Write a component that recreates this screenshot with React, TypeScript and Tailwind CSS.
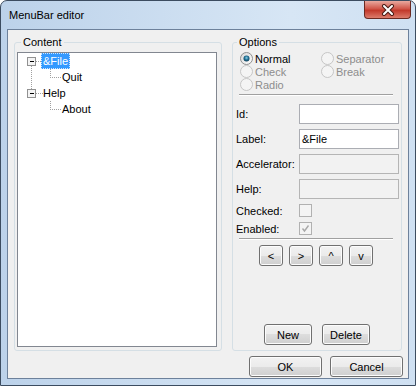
import React from 'react';

const btn =
  'flex items-center justify-center rounded-[3px] border border-[#707070] bg-[linear-gradient(#f2f2f2_0%,#ebebeb_50%,#dddddd_50%,#cfcfcf_100%)] shadow-[inset_0_0_0_1px_#fcfcfc] text-black';

const Radio: React.FC<{ checked?: boolean; disabled?: boolean; label: string }> = ({ checked, disabled, label }) => (
  <div className="flex h-[13px] items-center gap-[2px]">
    <svg width="13" height="13" viewBox="0 0 13 13">
      <defs>
        <radialGradient id="rdot" cx="50%" cy="40%" r="60%">
          <stop offset="0%" stopColor="#8ad0e8" />
          <stop offset="55%" stopColor="#1f6d90" />
          <stop offset="100%" stopColor="#0f3f5a" />
        </radialGradient>
        <linearGradient id="rfill" x1="0" y1="0" x2="1" y2="1">
          <stop offset="0%" stopColor="#d6d6d6" />
          <stop offset="100%" stopColor="#ffffff" />
        </linearGradient>
      </defs>
      <circle cx="6.5" cy="6.5" r="6" fill={disabled ? '#f4f4f4' : 'url(#rfill)'} stroke={disabled ? '#c5c5c5' : '#8e8f8f'} />
      {checked && <circle cx="6.5" cy="6.5" r="3" fill="url(#rdot)" />}
    </svg>
    <span className={disabled ? 'text-[#8d8d8d]' : 'text-black'}>{label}</span>
  </div>
);

const Field: React.FC<{ label: string; value?: string; disabled?: boolean }> = ({ label, value, disabled }) => (
  <div className="flex h-[20px] items-center">
    <span className="w-[63px]">{label}</span>
    <div
      className={`flex h-[20px] w-[100px] items-center border px-[2px] ${
        disabled ? 'border-[#b5b5b5] bg-[#f2f2f2]' : 'border-[#abadb3] bg-white'
      }`}
    >
      {value}
    </div>
  </div>
);

const Check: React.FC<{ label: string; checked?: boolean }> = ({ label, checked }) => (
  <div className="flex h-[13px] items-center">
    <span className="w-[63px]">{label}</span>
    <div className="flex h-[13px] w-[13px] items-center justify-center border border-[#b1b1b1] bg-[#f4f4f4]">
      {checked && (
        <svg width="9" height="9" viewBox="0 0 9 9">
          <path d="M1.5 4.5 L3.5 7 L7.5 1.5" fill="none" stroke="#a8a8a8" strokeWidth="1.4" />
        </svg>
      )}
    </div>
  </div>
);

const Etched: React.FC = () => <div className="ml-[6px] mr-[8px] border-t border-b border-t-[#a0a0a0] border-b-white" />;

const TreeLines: React.FC = () => (
  <svg className="absolute left-0 top-0" width="80" height="70" shapeRendering="crispEdges">
    <g stroke="#a0a0a0" strokeDasharray="1 1" fill="none">
      <path d="M13.5 13 V36" />
      <path d="M18 8.5 H23" />
      <path d="M18 40.5 H25" />
      <path d="M32.5 16 V24" />
      <path d="M32 24.5 H43" />
      <path d="M32.5 48 V56" />
      <path d="M32 56.5 H43" />
    </g>
    {[4, 36].map((y) => (
      <g key={y}>
        <rect x="9.5" y={y + 0.5} width="8" height="8" fill="#f4f4f4" stroke="#919191" />
        <path d={`M11.5 ${y + 4.5} H15.5`} stroke="#000" />
      </g>
    ))}
  </svg>
);

const App: React.FC = () => {
  return (
    <div className="h-[386px] w-[416px] bg-white font-['Liberation_Sans',Arial,sans-serif] text-[11px] leading-[14px] text-black">
      <div className="flex h-full flex-col rounded-t-[7px] border border-[#3c4c60] bg-[linear-gradient(to_right,#bcd2ea,#d7e6f5_70%,#cfe0f2)]">
        {/* Title bar */}
        <div className="flex h-[28px] items-start justify-between">
          <span className="ml-[8px] mt-[7px]">MenuBar editor</span>
          <div className="mr-[4px] flex h-[18px] w-[47px] items-center justify-center rounded-b-[4px] border border-t-0 border-[#6b2a22] bg-[linear-gradient(#e9a99f_0%,#d0574a_45%,#c2392b_55%,#dc7b6b_100%)]">
            <svg width="16" height="12" viewBox="0 0 16 12">
              <path d="M4 2 L12 10 M12 2 L4 10" stroke="#4a1c16" strokeWidth="4" strokeLinecap="round" />
              <path d="M4 2 L12 10 M12 2 L4 10" stroke="#ffffff" strokeWidth="2" strokeLinecap="round" />
            </svg>
          </div>
        </div>

        {/* Client area */}
        <div className="mx-[6px] flex h-[350px] flex-col border border-[#6d819b] bg-[#f0f0f0]">
          <div className="mt-[4px] flex gap-[10px] pl-[6px]">
            {/* Content */}
            <fieldset className="h-[317px] w-[208px] rounded-[3px] border border-[#d5dfe5] pl-[2px] pr-[4px]">
              <legend className="ml-[4px] px-[2px] leading-[16px]">Content</legend>
              <div className="relative mt-[2px] h-[295px] border border-[#828790] bg-white">
                <TreeLines />
                <div className="relative flex flex-col">
                  <div className="flex h-[16px] items-center pl-[23px]">
                    <span className="bg-[#3399ff] px-[2px] leading-[16px] text-white outline-1 outline-dotted outline-[#cfe6ff] -outline-offset-1">&amp;File</span>
                  </div>
                  <div className="flex h-[16px] items-center pl-[44px]">Quit</div>
                  <div className="flex h-[16px] items-center pl-[25px]">Help</div>
                  <div className="flex h-[16px] items-center pl-[44px]">About</div>
                </div>
              </div>
            </fieldset>

            {/* Options */}
            <fieldset className="flex h-[317px] w-[170px] flex-col rounded-[3px] border border-[#d5dfe5]">
              <legend className="ml-[4px] px-[2px] leading-[16px]">Options</legend>
              <div className="flex h-full flex-col">
                <div className="mt-[2px] grid grid-cols-[81px_1fr] pl-[7px]">
                  <Radio checked label="Normal" />
                  <Radio disabled label="Separator" />
                  <Radio disabled label="Check" />
                  <Radio disabled label="Break" />
                  <Radio disabled label="Radio" />
                </div>
                <div className="mt-[3px]">
                  <Etched />
                </div>
                <div className="mt-[8px] flex flex-col gap-[5px] pl-[3px]">
                  <Field label="Id:" />
                  <Field label="Label:" value="&File" />
                  <Field label="Accelerator:" disabled />
                  <Field label="Help:" disabled />
                </div>
                <div className="mt-[5px] flex flex-col gap-[5px] pl-[3px]">
                  <Check label="Checked:" />
                  <Check label="Enabled:" checked />
                </div>
                <div className="mt-[3px]">
                  <Etched />
                </div>
                <div className="mt-[5px] flex gap-[6px] pl-[26px]">
                  {['<', '>', '^', 'v'].map((c) => (
                    <div key={c} className={`${btn} h-[21px] w-[24px] text-[#333]`}>
                      {c}
                    </div>
                  ))}
                </div>
                <div className="mb-[5px] mt-auto flex gap-[10px] pl-[31px]">
                  <div className={`${btn} h-[21px] w-[48px]`}>New</div>
                  <div className={`${btn} h-[21px] w-[48px]`}>Delete</div>
                </div>
              </div>
            </fieldset>
          </div>

          {/* Dialog buttons */}
          <div className="mt-[5px] flex justify-end gap-[8px] pr-[5px]">
            <div className={`${btn} h-[21px] w-[73px]`}>OK</div>
            <div className={`${btn} h-[21px] w-[73px]`}>Cancel</div>
          </div>
        </div>
      </div>
    </div>
  );
};

export default App;
